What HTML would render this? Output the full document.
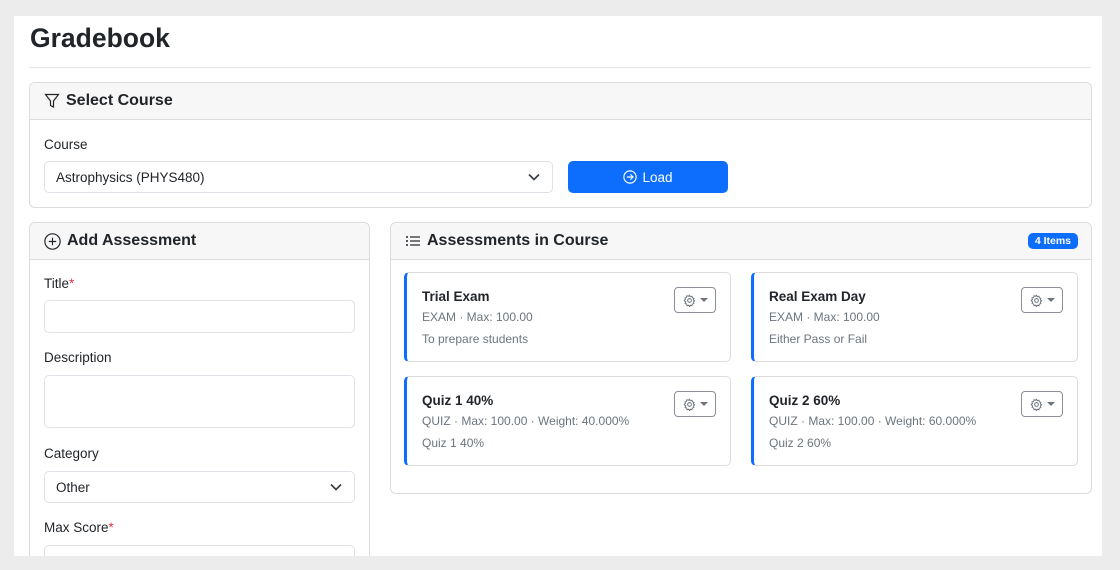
<!DOCTYPE html>
<html><head><style>
*{box-sizing:border-box;margin:0;padding:0}
body{width:1120px;height:570px;background:#ececec;font-family:"Liberation Sans",sans-serif;color:#212529;position:relative;overflow:hidden}
.page{position:absolute;left:14px;top:16px;width:1088px;height:540px;background:#fff;overflow:hidden}
.abs{position:absolute}
h1{position:absolute;left:16px;top:7px;font-size:26.5px;font-weight:bold;color:#212529}
.hr{position:absolute;left:15px;top:51px;width:1062px;height:1px;background:#e5e5e5}
.card{position:absolute;border:1px solid #dcdcdc;border-radius:6px;background:#fff;overflow:hidden}
.ch{height:37px;background:#f7f7f7;border-bottom:1px solid #dcdcdc;font-size:16px;font-weight:bold;display:flex;align-items:center;padding-left:14px;gap:6px}
.lbl{position:absolute;font-size:13.5px;color:#212529}
.inp{position:absolute;border:1px solid #dee2e6;border-radius:5px;background:#fff;font-size:13.5px;padding-left:11px;display:flex;align-items:center}
.req{color:#dc3545}
.item{position:absolute;width:327px;height:90px;border:1px solid #dcdcdc;border-left:3px solid #0d6efd;border-radius:5px;background:#fff}
.item .t{position:absolute;left:15px;top:16px;font-size:13.5px;font-weight:bold}
.item .m{position:absolute;left:15px;top:37px;font-size:12px;color:#6c757d}
.item .d{position:absolute;left:15px;top:59px;font-size:12px;color:#6c757d}
.gear{position:absolute;right:14px;top:14px;width:42px;height:26px;border:1px solid #8a9096;border-radius:4px;display:flex;align-items:center;justify-content:center;gap:4px}
.caret{width:0;height:0;border-left:4px solid transparent;border-right:4px solid transparent;border-top:4px solid #6c757d}
</style></head><body>
<div class="page">
<h1>Gradebook</h1>
<div class="hr"></div>
<div class="card" style="left:15px;top:66px;width:1063px;height:126px">
 <div class="ch"><svg width="16" height="16" viewBox="0 0 16 16" fill="none" stroke="#212529" stroke-width="1.2"><path d="M1.5 1.5h13l-5 6.5v6l-3-1.5V8z"/></svg>Select Course</div>
 <div class="lbl" style="left:14px;top:54px">Course</div>
 <div class="inp" style="left:14px;top:78px;width:509px;height:32px">Astrophysics (PHYS480)<svg class="abs" style="right:12px;top:11px" width="12" height="8" viewBox="0 0 12 8" fill="none" stroke="#343a40" stroke-width="1.6"><path d="M1 1.5l5 5 5-5"/></svg></div>
 <div class="abs" style="left:538px;top:78px;width:160px;height:32px;background:#0d6efd;border-radius:5px;color:#fff;font-size:13.5px;display:flex;align-items:center;justify-content:center;gap:5px"><svg width="14" height="14" viewBox="0 0 16 16" fill="none" stroke="#fff" stroke-width="1.3"><circle cx="8" cy="8" r="7"/><path d="M4.5 8h7M8.5 5l3 3-3 3"/></svg>Load</div>
</div>
<div class="card" style="left:15px;top:206px;width:341px;height:360px">
 <div class="ch"><svg width="17" height="17" viewBox="0 0 16 16" fill="none" stroke="#212529" stroke-width="1.1"><circle cx="8" cy="8" r="7.2"/><path d="M8 4.5v7M4.5 8h7"/></svg>Add Assessment</div>
 <div class="lbl" style="left:14px;top:53px">Title<span class="req">*</span></div>
 <div class="inp" style="left:14px;top:77px;width:311px;height:33px"></div>
 <div class="lbl" style="left:14px;top:127px">Description</div>
 <div class="inp" style="left:14px;top:152px;width:311px;height:53px"></div>
 <div class="lbl" style="left:14px;top:223px">Category</div>
 <div class="inp" style="left:14px;top:248px;width:311px;height:32px">Other<svg class="abs" style="right:12px;top:11px" width="12" height="8" viewBox="0 0 12 8" fill="none" stroke="#343a40" stroke-width="1.6"><path d="M1 1.5l5 5 5-5"/></svg></div>
 <div class="lbl" style="left:14px;top:297px">Max Score<span class="req">*</span></div>
 <div class="inp" style="left:14px;top:322px;width:311px;height:33px"></div>
</div>
<div class="card" style="left:376px;top:206px;width:702px;height:272px">
 <div class="ch"><svg width="16" height="14" viewBox="0 0 16 14" fill="#212529"><circle cx="2" cy="3" r="1"/><circle cx="2" cy="7" r="1"/><circle cx="2" cy="11" r="1"/><rect x="5" y="2.4" width="10" height="1.2"/><rect x="5" y="6.4" width="10" height="1.2"/><rect x="5" y="10.4" width="10" height="1.2"/></svg>Assessments in Course</div>
 <div class="abs" style="right:13px;top:10px;background:#0d6efd;color:#fff;font-size:10.5px;font-weight:bold;padding:2px 7px;border-radius:5px">4 Items</div>
</div>
<div class="item" style="left:390px;top:256px"><div class="t">Trial Exam</div><div class="m">EXAM · Max: 100.00</div><div class="d">To prepare students</div><div class="gear"><svg width="13" height="13" viewBox="0 0 16 16" fill="none" stroke="#6c757d" stroke-width="1.2"><circle cx="8" cy="8" r="2.3"/><path d="M8 1.5l1 1.8 2-.6.4 2 2 .6-.6 2 1.5 1.2-1.5 1.3.6 2-2 .6-.4 2-2-.6-1 1.8-1-1.8-2 .6-.4-2-2-.6.6-2L1.5 8l1.5-1.2-.6-2 2-.6.4-2 2 .6z"/></svg><span class="caret"></span></div></div>
<div class="item" style="left:737px;top:256px"><div class="t">Real Exam Day</div><div class="m">EXAM · Max: 100.00</div><div class="d">Either Pass or Fail</div><div class="gear"><svg width="13" height="13" viewBox="0 0 16 16" fill="none" stroke="#6c757d" stroke-width="1.2"><circle cx="8" cy="8" r="2.3"/><path d="M8 1.5l1 1.8 2-.6.4 2 2 .6-.6 2 1.5 1.2-1.5 1.3.6 2-2 .6-.4 2-2-.6-1 1.8-1-1.8-2 .6-.4-2-2-.6.6-2L1.5 8l1.5-1.2-.6-2 2-.6.4-2 2 .6z"/></svg><span class="caret"></span></div></div>
<div class="item" style="left:390px;top:360px"><div class="t">Quiz 1 40%</div><div class="m">QUIZ · Max: 100.00 · Weight: 40.000%</div><div class="d">Quiz 1 40%</div><div class="gear"><svg width="13" height="13" viewBox="0 0 16 16" fill="none" stroke="#6c757d" stroke-width="1.2"><circle cx="8" cy="8" r="2.3"/><path d="M8 1.5l1 1.8 2-.6.4 2 2 .6-.6 2 1.5 1.2-1.5 1.3.6 2-2 .6-.4 2-2-.6-1 1.8-1-1.8-2 .6-.4-2-2-.6.6-2L1.5 8l1.5-1.2-.6-2 2-.6.4-2 2 .6z"/></svg><span class="caret"></span></div></div>
<div class="item" style="left:737px;top:360px"><div class="t">Quiz 2 60%</div><div class="m">QUIZ · Max: 100.00 · Weight: 60.000%</div><div class="d">Quiz 2 60%</div><div class="gear"><svg width="13" height="13" viewBox="0 0 16 16" fill="none" stroke="#6c757d" stroke-width="1.2"><circle cx="8" cy="8" r="2.3"/><path d="M8 1.5l1 1.8 2-.6.4 2 2 .6-.6 2 1.5 1.2-1.5 1.3.6 2-2 .6-.4 2-2-.6-1 1.8-1-1.8-2 .6-.4-2-2-.6.6-2L1.5 8l1.5-1.2-.6-2 2-.6.4-2 2 .6z"/></svg><span class="caret"></span></div></div>
</div>
</body></html>
